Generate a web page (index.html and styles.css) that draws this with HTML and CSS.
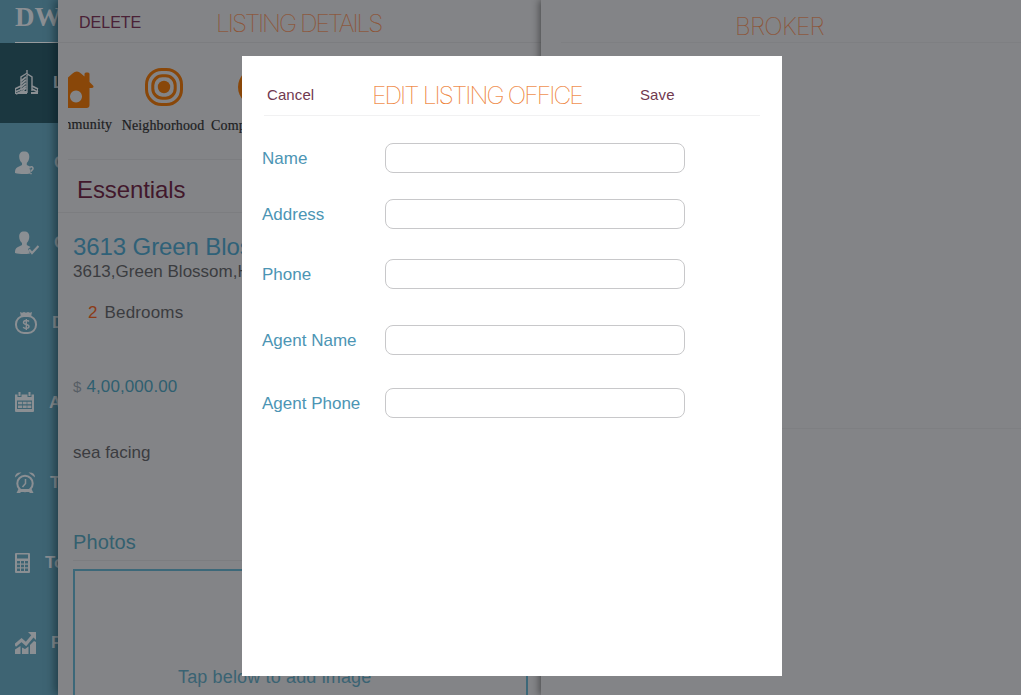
FILE: index.html
```html
<!DOCTYPE html>
<html lang="en">
  <head>
    <meta charset="UTF-8" />
    <meta name="viewport" content="width=device-width, initial-scale=1.0" />
    <title>Edit Listing Office</title>
    <link rel="stylesheet" href="styles.css">
  </head>
  <body>
    <div class="app">
      <nav class="sidebar">
        <div class="brand">DW</div>
        <a class="nav-item active">
          <svg width="24" height="26" viewBox="0 0 24 26">
            <path d="M6 20V7l5.500-3.500 5.500 3.500v14M12 0v4M12 5v18" fill="none" stroke="currentColor" stroke-width="1.400" />
            <path d="M6 11l5-4M6 14l5-4M6 17l5-4M6 20l5-4M7 22l4-4M0 19l6-3M0 22l7-3M1 24l7-3M17 16l6 3M17 19l6 3" stroke="currentColor" stroke-width="1.700" />
            <path d="M0 24l6-3h6v3zM16 22h7v2h-7zM0 18h1v6H0zM22 18h1v6h-1z" fill="currentColor" />
          </svg>
          <span>L</span>
        </a>
        <a class="nav-item">
          <svg width="24" height="24" viewBox="0 0 24 24">
            <path d="M9 .5c4 0 5.300 2 5.300 5.200 0 2.300-1 4.800-2.500 6.300v2l3.200 1.500c-1 1.500-1 3 .5 3v4c-5 .8-11.500.7-15.500-.5 0-4 1-5.500 4-6.500l3-1.500v-2C5.200 10.500 4.200 8 4.200 5.700 4.200 2.500 5.500.5 9 .5z" fill="currentColor" />
            <path d="M14.500 17.500c.5-2.500 4-2 3.500.3-.3 1.200-1.800 1.200-1.800 3M16 22v1.300" fill="none" stroke="currentColor" stroke-width="1.500" />
          </svg>
          <span>C</span>
        </a>
        <a class="nav-item">
          <svg width="24" height="24" viewBox="0 0 24 24">
            <path d="M9 .5c4 0 5.300 2 5.300 5.200 0 2.300-1 4.800-2.500 6.300v2l3.700 2-2.500 2 2 4.500c-5 .8-11 .7-15-.5 0-4 1-5.500 4-6.500l3-1.500v-2C5.200 10.500 4.200 8 4.200 5.700 4.200 2.500 5.500.5 9 .5z" fill="currentColor" />
            <path d="M14 18.500l3 3.500 6.500-7" fill="none" stroke="currentColor" stroke-width="2.200" />
          </svg>
          <span>C</span>
        </a>
        <a class="nav-item">
          <svg width="24" height="24" viewBox="0 0 24 24">
            <path d="M5 1l2 .7L9 1l2 .7L13 1l2 .7 2-.7-1 5H6z" fill="currentColor" />
            <rect x="1" y="5" width="20" height="17" rx="8" fill="none" stroke="currentColor" stroke-width="2" />
            <path d="M14 10.500c-1-1.500-5.500-1.500-5.500 1 0 2.700 5.500 1.300 5.500 4 0 2.300-4.500 2.500-5.800.7M11.300 8v11" fill="none" stroke="currentColor" stroke-width="1.400" />
          </svg>
          <span>D</span>
        </a>
        <a class="nav-item">
          <svg width="24" height="24" viewBox="0 0 24 24">
            <path fill-rule="evenodd" d="M0 3.500h2.500V6h4V3.500h6V6h4V3.500H19V20q0 1-1 1H1q-1 0-1-1zM2 9.500V18h15V9.500z" fill="currentColor" />
            <path d="M4.500 1v4M14.500 1v4" stroke="currentColor" stroke-width="2" />
            <path d="M3 12h4M7.700 12h4M12.300 12h4M3 15.700h4M7.700 15.700h4M12.300 15.700h4" stroke="currentColor" stroke-width="2.600" />
          </svg>
          <span>A</span>
        </a>
        <a class="nav-item">
          <svg width="24" height="24" viewBox="0 0 24 24">
            <circle cx="10" cy="12.500" r="7.700" fill="none" stroke="currentColor" stroke-width="2" />
            <path d="M0 6.500Q0 1 6.500 1.500zM20 6.500Q20 1 13.500 1.500zM1.500 22l2-4h13l2 4H15l-1-1H6l-1 1z" fill="currentColor" />
            <path d="M10.500 8v4.500L7.500 16" fill="none" stroke="currentColor" stroke-width="1.500" />
          </svg>
          <span>T</span>
        </a>
        <a class="nav-item">
          <svg width="24" height="24" viewBox="0 0 24 24">
            <path fill-rule="evenodd" d="M1 2h13q1 0 1 1v18q0 1-1 1H1q-1 0-1-1V3q0-1 1-1zM2 3.500v4h11v-4zM2 10v2.500h3V10zM6 10v2.500h3V10zM10 10v2.500h3V10zM2 13.700v2.500h3v-2.500zM6 13.700v2.500h3v-2.500zM10 13.700v2.500h3v-2.500zM2 17.500V20h3v-2.500zM6 17.500V20h3v-2.500zM10 17.500V20h3v-2.500z" fill="currentColor" />
          </svg>
          <span>To</span>
        </a>
        <a class="nav-item">
          <svg width="24" height="24" viewBox="0 0 24 24">
            <path d="M0 18.500l5.500-3.500v8H0zM7 16.500L10 18l3.500-2.500V23H7zM15 14l4-4 2 1v12h-6z" fill="currentColor" />
            <path d="M0 14.500l6.500-5.500 4.500 4L18.500 4" fill="none" stroke="currentColor" stroke-width="3.200" />
            <path d="M13 1h8v8z" fill="currentColor" />
          </svg>
          <span>F</span>
        </a>
      </nav>

      <main class="details">
        <div class="details-header">
          <span class="delete">DELETE</span>
          <h1 class="thin-title">LISTING DETAILS</h1>
        </div>

        <div class="links">
          <div class="link community">
            <svg width="40" height="40" viewBox="0 0 40 40">
              <path fill-rule="evenodd" d="M1 17L12.500 6.500Q17 2.500 21 6.500L24.500 9.500V7q0-1.500 1.500-1.500h2q1.500 0 1.500 1.500V15l3.500 3.500q1.500 1.800-1 2.500h-2.500v17q0 3-3 3H6q-3 0-3-3V21H1.500q-2-1-.5-4zM16 23.500a6 6 0 1 0 .01 0z" fill="currentColor" />
            </svg>
            <span>Community</span>
          </div>
          <div class="link neighborhood">
            <svg width="40" height="40" viewBox="0 0 40 40">
              <rect x="2.500" y="2.500" width="35" height="35" rx="15" fill="none" stroke="currentColor" stroke-width="3" />
              <rect x="8.800" y="8.800" width="22.400" height="22.400" rx="9.500" fill="none" stroke="currentColor" stroke-width="3" />
              <circle cx="20" cy="20" r="6.200" fill="currentColor" />
            </svg>
            <span>Neighborhood</span>
          </div>
          <div class="link comparables">
            <svg width="40" height="40" viewBox="0 0 40 40">
              <circle cx="20" cy="20" r="19" fill="currentColor" />
            </svg>
            <span>Comparables</span>
          </div>
        </div>

        <h2 class="section-title">Essentials</h2>

        <div class="listing">
          <div class="listing-name">3613 Green Blossom</div>
          <div class="address">3613,Green Blossom,Houston</div>
          <div class="bedrooms"><b>2</b>Bedrooms</div>
          <div class="price"><small>$</small>4,00,000.00</div>
          <div class="notes">sea facing</div>
        </div>

        <h2 class="photos-title">Photos</h2>
        <div class="photo-box">Tap below to add image</div>
      </main>

      <aside class="broker">
        <div class="broker-header">
          <h1 class="thin-title">BROKER</h1>
        </div>
        <div class="broker-body"></div>
      </aside>
    </div>

    <div class="overlay">
      <form class="modal">
        <div class="modal-header">
          <button type="button">Cancel</button>
          <h1 class="thin-title">EDIT LISTING OFFICE</h1>
          <button type="button">Save</button>
        </div>
        <div class="fields">
          <label for="name">Name</label>
          <input type="text" id="name" />
          <label for="address">Address</label>
          <input type="text" id="address" />
          <label for="phone">Phone</label>
          <input type="text" id="phone" />
          <label for="agentName">Agent Name</label>
          <input type="text" id="agentName" />
          <label for="agentPhone">Agent Phone</label>
          <input type="text" id="agentPhone" />
        </div>
      </form>
    </div>
  </body>
</html>
```
FILE: styles.css
```css
* {
  box-sizing: border-box;
}

body {
  margin: 0;
  height: 695px;
  overflow: hidden;
  font-family: "Liberation Sans", Arial, sans-serif;
  font-size: 17px;
  color: #3b3c40;
}

h1,
h2 {
  margin: 0;
  font-weight: 400;
}

.app {
  display: flex;
  height: 695px;
  overflow: hidden;
}

.thin-title {
  font-family: Inter, sans-serif;
  font-weight: 100;
  font-size: 24.5px;
  line-height: 30px;
  letter-spacing: -2px;
  white-space: nowrap;
  -webkit-text-stroke: 0.2px;
  color: #8f5232;
}

/* sidebar */
.sidebar {
  flex: 0 0 58px;
  background: #3e6473;
  color: #8b8f93;
  overflow: hidden;
}

.brand {
  height: 43px;
  margin-left: 15px;
  border-bottom: 1px solid #979b9e;
  font-family: "Liberation Serif", serif;
  font-weight: bold;
  font-size: 27px;
  line-height: 35px;
}

.nav-item {
  display: flex;
  align-items: center;
  height: 80px;
  padding-left: 15px;
  font-weight: bold;
}

.nav-item svg {
  flex: none;
}

.nav-item span {
  margin-left: 15px;
}

.nav-item:nth-of-type(4) span {
  margin-left: 13px;
}

.nav-item:nth-of-type(5) span {
  margin-left: 10px;
}

.nav-item:nth-of-type(6) span {
  margin-left: 11px;
}

.nav-item:nth-of-type(7) span {
  margin-left: 6px;
}

.nav-item:nth-of-type(8) span {
  margin-left: 12px;
}

.nav-item.active {
  background: #1b3740;
}

.nav-item.active span {
  margin-left: 14px;
}

/* listing details */
.details {
  flex: 0 0 483px;
  position: relative;
  background: #838487;
  box-shadow: -3px 0 9px rgba(0, 20, 25, 0.5);
}

.details-header {
  display: flex;
  height: 43px;
  padding: 8px 0 0 21px;
  border-bottom: 1px solid #7c7d80;
}

.delete {
  width: 137px;
  font-size: 16px;
  line-height: 29px;
  color: #4a2136;
}

.links {
  display: flex;
  height: 117px;
  margin-left: 10px;
  padding-top: 24px;
  border-bottom: 1px solid #7c7d80;
  overflow: hidden;
}

.link {
  flex: none;
  display: flex;
  flex-direction: column;
  align-items: center;
  color: #894709;
}

.link.community {
  width: 72px;
  margin-left: -26px;
}

.link.community svg {
  margin-left: 4px;
}

.link.neighborhood {
  width: 84px;
  margin-left: 7px;
}

.link.neighborhood svg {
  margin-left: 2px;
}

.link.comparables {
  width: 92px;
  margin-left: 6px;
}

.link.comparables span {
  align-self: flex-start;
}

.link svg {
  overflow: visible;
}

.link span {
  margin-top: 11px;
  font-family: "Liberation Serif", serif;
  font-size: 14px;
  line-height: 16px;
  letter-spacing: 0.15px;
  -webkit-text-stroke: 0.2px #1d1e22;
  color: #1d1e22;
}

.link.community span {
  margin-top: 10px;
}

.section-title {
  height: 53px;
  padding-left: 19px;
  border-bottom: 1px solid #7c7d80;
  font-size: 24px;
  line-height: 60px;
  letter-spacing: -0.1px;
  color: #42182c;
}

.listing {
  height: 317px;
  padding: 20px 0 0 15px;
  white-space: nowrap;
}

.listing-name {
  font-size: 24px;
  line-height: 28px;
  letter-spacing: -0.1px;
  color: #2f6178;
}

.address {
  margin-top: 1px;
  line-height: 20px;
}

.bedrooms {
  margin-top: 21px;
  padding-left: 15px;
  line-height: 20px;
  letter-spacing: 0.15px;
}

.bedrooms b {
  margin-right: 7px;
  font-weight: 400;
  color: #8c3b16;
}

.price {
  margin-top: 54px;
  line-height: 20px;
  letter-spacing: 0.1px;
  color: #2f5f70;
}

.price small {
  margin-right: 5px;
  font-size: 15px;
  color: #575e65;
}

.notes {
  margin-top: 46px;
  line-height: 20px;
}

.photos-title {
  height: 31px;
  margin-left: 15px;
  border-bottom: 1px solid #7c7d80;
  font-size: 20px;
  line-height: 24px;
  letter-spacing: 0.1px;
  color: #33606f;
}

.photo-box {
  width: 455px;
  height: 220px;
  margin: 8px 0 0 15px;
  padding: 95px 0 0 103px;
  border: 2px solid #3c6879;
  font-size: 18px;
  line-height: 22px;
  letter-spacing: 0.15px;
  color: #3a6373;
}

/* broker */
.broker {
  flex: 1;
  position: relative;
  background: #838487;
  box-shadow: -2px 0 7px rgba(0, 0, 0, 0.4);
}

.broker-header {
  height: 43px;
  margin-left: 20px;
  padding: 11px 0 0 174px;
  border-bottom: 1px solid #7e7f82;
}

.broker-header .thin-title {
  letter-spacing: -0.7px;
}

.broker-body {
  height: 386px;
  border-bottom: 1px solid #7e7f82;
}

/* edit dialog */
.overlay {
  position: absolute;
  inset: 0;
  padding: 56px 0 0 242px;
}

.modal {
  width: 540px;
  height: 620px;
  background: white;
}

.modal-header {
  display: flex;
  width: 496px;
  height: 60px;
  margin-left: 22px;
  padding: 24px 0 0 3px;
  border-bottom: 1px solid #f1f1f2;
}

.modal-header .thin-title {
  width: 268px;
  letter-spacing: -1.85px;
  color: #ee7a2c;
}

.modal-header button {
  padding: 0;
  border: none;
  background: none;
  font: 15px/30px "Liberation Sans", Arial, sans-serif;
  color: #71394f;
  height: 30px;
  letter-spacing: 0.1px;
}

.modal-header button:first-child {
  width: 105px;
  text-align: left;
}

.fields {
  display: grid;
  grid-template-columns: 123px 300px;
  grid-template-rows: 56px 60px 66px 63px 30px;
  padding: 27px 0 0 20px;
}

.fields label {
  line-height: 31px;
  color: #4c95b4;
}

.fields input {
  height: 30px;
  border: 1px solid #c8c8ca;
  border-radius: 8px;
  background: white;
}
```
